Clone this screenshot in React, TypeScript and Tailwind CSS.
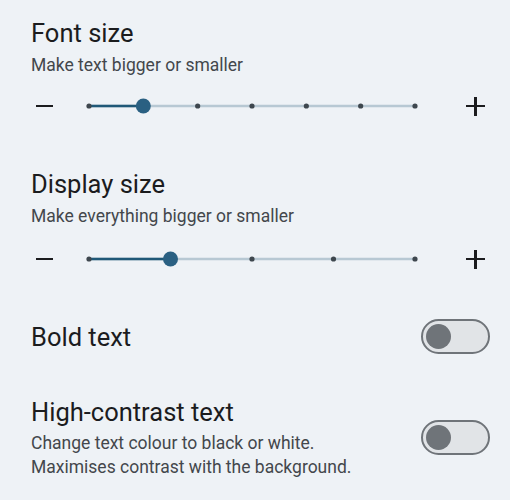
const FONT = { fontFamily: 'Roboto, "Noto Sans", sans-serif' };

function Slider({ stops, value }: { stops: number; value: number }) {
  const width = 326;
  const step = width / (stops - 1);
  const thumbX = 4 + value * step;
  return (
    <svg width={width + 8} height={20} viewBox={`0 0 ${width + 8} 20`} className="block">
      <line x1={4} y1={10} x2={width + 4} y2={10} stroke="#b7c8d3" strokeWidth={2.5} />
      <line x1={4} y1={10} x2={thumbX} y2={10} stroke="#1f5877" strokeWidth={2.5} />
      {Array.from({ length: stops }).map((_, i) =>
        i === value ? null : <circle key={i} cx={4 + i * step} cy={10} r={2.6} fill="#3e474e" />
      )}
      <circle cx={thumbX} cy={10} r={7.5} fill="#2a6082" />
    </svg>
  );
}

function SliderRow({ stops, value }: { stops: number; value: number }) {
  return (
    <div className="flex h-[40px] items-center">
      <div className="ml-[5px] h-[2.5px] w-[17px] bg-[#1b1c1e]" />
      <div className="ml-[32px]">
        <Slider stops={stops} value={value} />
      </div>
      <div className="relative ml-[47px] h-[19px] w-[19px]">
        <div className="absolute left-0 top-[8.25px] h-[2.5px] w-[19px] bg-[#1b1c1e]" />
        <div className="absolute left-[8.25px] top-0 h-[19px] w-[2.5px] bg-[#1b1c1e]" />
      </div>
    </div>
  );
}

function Toggle() {
  return (
    <div className="flex h-[35px] w-[69px] items-center rounded-full border-[2.5px] border-[#6f7479] bg-[#e1e4e7] pl-[2.5px]">
      <div className="h-[25px] w-[25px] rounded-full bg-[#6f7479]" />
    </div>
  );
}

export default function App() {
  return (
    <div className="min-h-[500px] w-[510px] bg-[#eef2f6] pl-[31px] pr-[20px] pt-[17px]" style={FONT}>
      <h2 className="text-[25.5px] leading-[32px] text-[#1b1c1e]">Font size</h2>
      <p className="mt-[4px] text-[17.5px] leading-[24px] text-[#43474c]">Make text bigger or smaller</p>
      <div className="mt-[9px]">
        <SliderRow stops={7} value={1} />
      </div>

      <h2 className="mt-[42px] text-[25.5px] leading-[32px] text-[#1b1c1e]">Display size</h2>
      <p className="mt-[4px] text-[17.5px] leading-[24px] text-[#43474c]">Make everything bigger or smaller</p>
      <div className="mt-[11px]">
        <SliderRow stops={5} value={1} />
      </div>

      <div className="mt-[40px] flex items-center justify-between">
        <span className="text-[25.5px] leading-[32px] text-[#1b1c1e]">Bold text</span>
        <Toggle />
      </div>

      <div className="mt-[42px] flex items-center justify-between">
        <div>
          <h2 className="text-[25.5px] leading-[32px] text-[#1b1c1e]">High-contrast text</h2>
          <p className="mt-[4px] text-[17.5px] leading-[23.5px] text-[#43474c]">
            Change text colour to black or white.
            <br />
            Maximises contrast with the background.
          </p>
        </div>
        <Toggle />
      </div>
    </div>
  );
}
